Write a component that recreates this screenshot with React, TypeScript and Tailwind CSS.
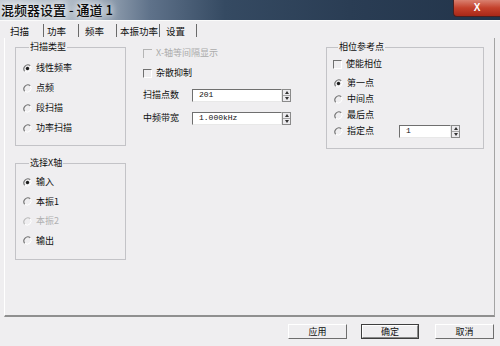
import React from "react";

const cjk = "font-['Noto_Sans_CJK_SC','Noto_Sans',sans-serif]";

function Radio({ checked = false, disabled = false }: { checked?: boolean; disabled?: boolean }) {
  return (
    <svg width="9" height="9" viewBox="0 0 9 9" className="shrink-0">
      <path d="M7.3 1.7 A4 4 0 0 0 1.7 7.3" fill="none" stroke={disabled ? "#b8b8b8" : "#6f6f6f"} strokeWidth="1.1" />
      <path d="M7.3 1.7 A4 4 0 0 1 1.7 7.3" fill="none" stroke="#ffffff" strokeWidth="1" />
      {checked && <circle cx="4.5" cy="4.5" r="1.7" fill="#1c1c1c" />}
    </svg>
  );
}

function Check({ disabled = false }: { disabled?: boolean }) {
  return (
    <div
      className={
        disabled
          ? "w-[9px] h-[9px] shrink-0 border-t border-l border-[#b5b5b5]"
          : "w-[9px] h-[9px] shrink-0 border border-[#707070] border-b-white border-r-white"
      }
    />
  );
}

function Spin() {
  return (
    <div className="w-[9px] h-[13px] flex flex-col border border-[#8a8a8a] bg-[#ecebee]">
      <div className="flex-1 flex items-center justify-center border-b border-[#a5a5a5]">
        <svg width="4" height="3" viewBox="0 0 4 3"><path d="M0 3 L2 0 L4 3 Z" fill="#333" /></svg>
      </div>
      <div className="flex-1 flex items-center justify-center">
        <svg width="4" height="3" viewBox="0 0 4 3"><path d="M0 0 L2 3 L4 0 Z" fill="#333" /></svg>
      </div>
    </div>
  );
}

function Field({ value, width }: { value: string; width: string }) {
  return (
    <div className="flex items-center">
      <div
        className={`${width} h-[13px] bg-white border border-[#6f6f6f] border-b-[#e8e8e8] border-r-[#e8e8e8] pl-[6px] flex items-center font-['Liberation_Mono',monospace] text-[8px] text-[#111]`}
      >
        {value}
      </div>
      <Spin />
    </div>
  );
}

function RadioRow({ label, checked, disabled, h }: { label: string; checked?: boolean; disabled?: boolean; h: string }) {
  return (
    <div className={`${h} flex items-center gap-[4px]`}>
      <Radio checked={checked} disabled={disabled} />
      <span className={disabled ? "text-[#b0b0b0]" : "text-[#0e0e0e]"}>{label}</span>
    </div>
  );
}

const tabs = [
  { label: "扫描", cls: "w-[39px] pl-[5px]" },
  { label: "功率", cls: "w-[35px] pl-[3px]" },
  { label: "频率", cls: "w-[38px] pl-[6px]" },
  { label: "本振功率", cls: "w-[43px] pl-[3px]" },
  { label: "设置", cls: "w-[37px] pl-[6px]" },
];

export default function App() {
  return (
    <div className={`w-[500px] h-[346px] overflow-hidden bg-[#efeef0] flex flex-col text-[9px] leading-[12px] ${cjk}`}>
      {/* Title bar */}
      <div className="h-[20px] shrink-0 flex items-start justify-between bg-[linear-gradient(90deg,#c4ccd4_0%,#a7b3c0_18%,#5f728a_30%,#354a62_45%,#2a3d54_70%,#22344a_100%)]">
        <div className="pl-[1px] pt-[2px] text-[13px] leading-[16px] font-medium text-[#0a0a0a] [text-shadow:0_0_6px_#ffffff,0_0_10px_#ffffff]">
          混频器设置 - 通道 1
        </div>
        <div className="w-[47px] h-[17px] rounded-bl-[4px] border border-t-0 border-r-0 border-[#4a2020] bg-[linear-gradient(180deg,#d98070_0%,#c4412c_50%,#a82818_100%)] flex items-center justify-center text-white text-[10px] font-bold font-['Liberation_Sans',sans-serif]">
          X
        </div>
      </div>

      {/* Tabs */}
      <div className="h-[18px] shrink-0 flex items-center pl-[5px] pt-[2px] border-t border-[#fafafa]">
        {tabs.map((t) => (
          <div key={t.label} className={`${t.cls} h-[13px] flex items-center border-r border-[#6a6a6a] text-[#0e0e0e] text-[9.5px]`}>
            {t.label}
          </div>
        ))}
      </div>

      {/* Panel */}
      <div className="ml-[4px] w-[491px] h-[279px] shrink-0 border-l border-l-white border-r border-r-[#a4a4a4] border-b-2 border-b-[#8f8f8f] flex items-start pl-[10px]">
        {/* Left column */}
        <div className="w-[111px] flex flex-col pt-[3px]">
          <fieldset className="h-[105px] border border-[#c3c3c7] pl-[7px] pt-[5px]">
            <legend className="ml-[6px] px-[1px] leading-[12px] text-[#0e0e0e]">扫描类型</legend>
            <RadioRow h="h-[20px]" label="线性频率" checked />
            <RadioRow h="h-[20px]" label="点频" />
            <RadioRow h="h-[20px]" label="段扫描" />
            <RadioRow h="h-[20px]" label="功率扫描" />
          </fieldset>
          <fieldset className="mt-[11px] h-[103px] border border-[#c3c3c7] pl-[7px] pt-[3px]">
            <legend className="ml-[6px] px-[1px] leading-[12px] text-[#0e0e0e]">选择X轴</legend>
            <RadioRow h="h-[20px]" label="输入" checked />
            <RadioRow h="h-[19px]" label="本振1" />
            <RadioRow h="h-[20px]" label="本振2" disabled />
            <RadioRow h="h-[19px]" label="输出" />
          </fieldset>
        </div>

        {/* Middle column */}
        <div className="ml-[17px] w-[149px] flex flex-col pt-[8px]">
          <div className="h-[14px] flex items-center gap-[4px]">
            <Check disabled />
            <span className="text-[#ababab]">X-轴等间隔显示</span>
          </div>
          <div className="mt-[6px] h-[14px] flex items-center gap-[4px]">
            <Check />
            <span className="text-[#0e0e0e]">杂散抑制</span>
          </div>
          <div className="mt-[8px] h-[14px] flex items-center">
            <span className="w-[49px] text-[#0e0e0e]">扫描点数</span>
            <Field value="201" width="w-[90px]" />
          </div>
          <div className="mt-[9px] h-[14px] flex items-center">
            <span className="w-[49px] text-[#0e0e0e]">中频带宽</span>
            <Field value="1.000kHz" width="w-[90px]" />
          </div>
        </div>

        {/* Right group */}
        <fieldset className="ml-[34px] mt-[3px] w-[158px] h-[108px] border border-[#c3c3c7] pl-[6px] pt-[4px]">
          <legend className="ml-[5px] px-[1px] leading-[12px] text-[#0e0e0e]">相位参考点</legend>
          <div className="h-[14px] flex items-center gap-[4px]">
            <Check />
            <span className="text-[#0e0e0e]">使能相位</span>
          </div>
          <div className="mt-[4px] pl-[1px]">
            <RadioRow h="h-[16px]" label="第一点" checked />
            <RadioRow h="h-[16px]" label="中间点" />
            <RadioRow h="h-[16px]" label="最后点" />
            <div className="h-[16px] flex items-center">
              <div className="w-[65px] flex items-center gap-[4px]">
                <Radio />
                <span className="text-[#0e0e0e]">指定点</span>
              </div>
              <Field value="1" width="w-[52px]" />
            </div>
          </div>
        </fieldset>
      </div>

      {/* Buttons */}
      <div className="mt-[7px] h-[15px] flex items-center pl-[288px] text-[#0e0e0e]">
        <div className="w-[59px] h-[15px] flex items-center justify-center border border-white border-r-[#6e6e6e] border-b-[#6e6e6e] bg-[#efeef0]">
          应用
        </div>
        <div className="ml-[14px] w-[58px] h-[15px] border border-[#3e3e3e] flex">
          <div className="flex-1 flex items-center justify-center border border-white border-r-[#8a8a8a] border-b-[#8a8a8a]">
            确定
          </div>
        </div>
        <div className="ml-[16px] w-[59px] h-[15px] flex items-center justify-center border border-white border-r-[#6e6e6e] border-b-[#6e6e6e]">
          取消
        </div>
      </div>
    </div>
  );
}
